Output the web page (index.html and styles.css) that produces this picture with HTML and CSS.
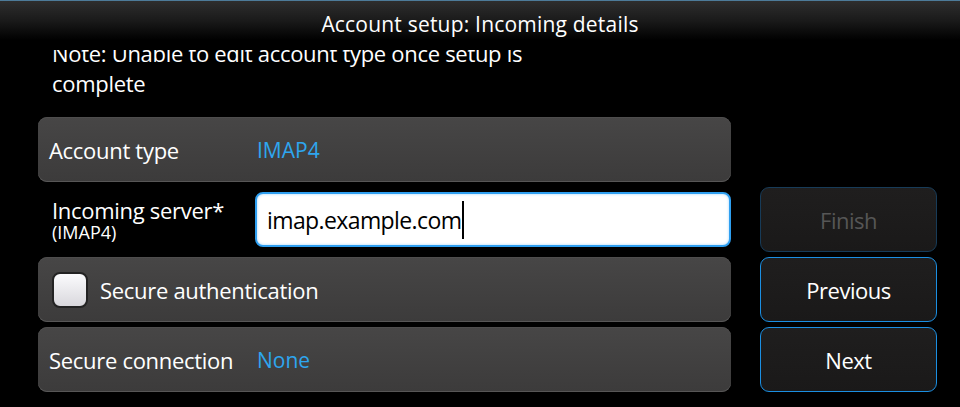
FILE: index.html
```html
<!DOCTYPE html>
<html>
<head>
<meta charset="utf-8">
<link rel="stylesheet" href="styles.css">
</head>
<body>
<div class="screen">
  <header class="titlebar">Account setup: Incoming details</header>
  <main class="content">
    <p class="note">Note: Unable to edit account type once setup is complete</p>
    <div class="grid">
      <div class="row panel">
        <span class="label">Account type</span>
        <span class="value">IMAP4</span>
      </div>
      <div class="spacer"></div>

      <div class="row server">
        <div class="server-label">
          <span class="label">Incoming server*</span>
          <span class="sub">(IMAP4)</span>
        </div>
        <div class="input"><span class="input-text">imap.example.com</span><span class="caret"></span></div>
      </div>
      <button class="btn disabled">Finish</button>

      <div class="row panel">
        <span class="checkbox"></span>
        <span class="label">Secure authentication</span>
      </div>
      <button class="btn">Previous</button>

      <div class="row panel">
        <span class="label">Secure connection</span>
        <span class="value">None</span>
      </div>
      <button class="btn">Next</button>
    </div>
  </main>
</div>
</body>
</html>
```
FILE: styles.css
```css
* { box-sizing: border-box; }
html, body { margin: 0; padding: 0; background: #000; }
body { width: 960px; height: 407px; overflow: hidden; font-family: "Open Sans", "DejaVu Sans", sans-serif; color: #fff; }

.screen { position: relative; width: 960px; height: 407px; display: flex; flex-direction: column; }

.titlebar {
  height: 50px;
  flex: none;
  border-top: 1px solid #4d7b99;
  background: linear-gradient(#2e2e2e 0%, #1a1a1a 40%, #000 80%);
  text-align: center;
  font-size: 21px;
  letter-spacing: 0.2px;
  line-height: 46px;
  padding-bottom: 4px;
  color: #fff;
}

.content { flex: 1; overflow: hidden; padding: 0 29px 0 38px; }

.note {
  margin: -12px 0 0 14px;
  width: 500px;
  font-size: 22px;
  line-height: 30px;
  letter-spacing: -0.3px;
  color: #fff;
}

.grid {
  display: grid;
  grid-template-columns: 693px 177px;
  column-gap: 29px;
  row-gap: 5px;
  grid-auto-rows: 65px;
  margin-top: 19px;
}

.row { display: flex; align-items: center; }

.panel {
  border-radius: 9px;
  background: linear-gradient(#474646, #3c3b3b);
  box-shadow: inset 0 -1px 0 #575656, inset 0 1px 0 #4e4d4d;
  padding-left: 11px;
}

.label { font-size: 22px; letter-spacing: -0.3px; color: #fff; }
.value { font-size: 21px; letter-spacing: 0px; color: #2ea6ef; }
.panel .label:first-child { width: 208px; flex: none; }

.server { padding-left: 14px; }
.server-label { width: 203px; display: flex; flex-direction: column; }
.server-label .label { line-height: 24px; }
.sub { font-size: 18px; line-height: 20px; color: #fff; letter-spacing: 0px; }

.input {
  flex: 1;
  height: 55px;
  border-radius: 8px;
  background: #fff;
  border: 2px solid #2f9ff0;
  box-shadow: inset 0 0 3px #9fd4fb;
  display: flex;
  align-items: center;
  padding-left: 10px;
}
.input-text { color: #000; font-size: 23px; letter-spacing: -0.6px; }
.caret { width: 2px; height: 38px; background: #000; margin-left: 1px; }

.checkbox {
  width: 36px; height: 36px; flex: none;
  border-radius: 8px;
  border: 2px solid #232323;
  background: linear-gradient(#fbfbfd, #d9d8dd);
  margin-right: 12px;
  margin-left: 3px;
}

.btn {
  font-family: inherit;
  border-radius: 9px;
  border: 1.5px solid #1b8fe2;
  background: linear-gradient(#1f1e1e, #1a1919);
  color: #fff;
  font-size: 22px;
  letter-spacing: -0.5px;
  padding: 0;
}
.btn.disabled { border-color: #173b58; color: #565656; }
```
